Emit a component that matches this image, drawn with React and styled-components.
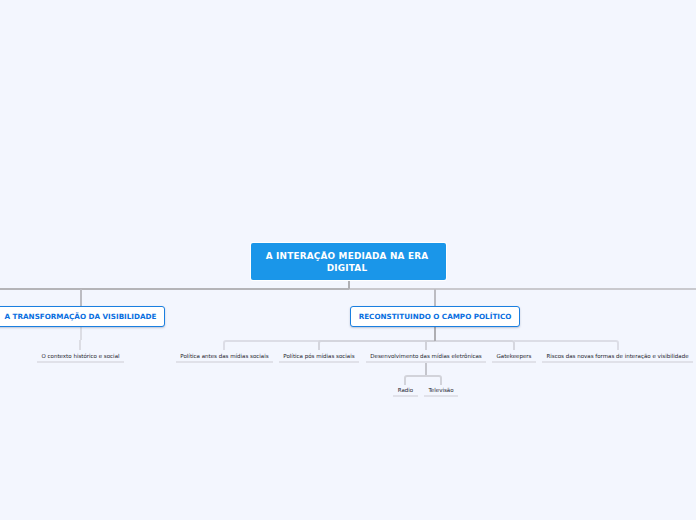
import React from "react";
import styled, { createGlobalStyle } from "styled-components";

const GlobalStyle = createGlobalStyle`
  html, body {
    margin: 0;
    padding: 0;
    background: #f3f6fe;
  }
`;

const branches = [
  { x: 37, y: 350, w: 87, text: "O contexto histórico e social" },
  { x: 176, y: 350, w: 97, text: "Política antes das mídias sociais" },
  { x: 279, y: 350, w: 80, text: "Política pós mídias sociais" },
  { x: 366, y: 350, w: 120, text: "Desenvolvimento das mídias eletrônicas" },
  { x: 492, y: 350, w: 44, text: "Gatekeepers" },
  { x: 542, y: 350, w: 151, text: "Riscos das novas formas de interação e visibilidade" },
  { x: 393, y: 384, w: 25, text: "Radio" },
  { x: 424, y: 384, w: 34, text: "Televisão" },
];

const lines = [
  { d: "M0 289H349", color: "#b4b4b8" },
  { d: "M349 289H696", color: "#c9c9ce" },
  { d: "M349 279V289", color: "#b0b0b4" },
  { d: "M81 289V307", color: "#bcbcc2" },
  { d: "M435 289V307", color: "#bcbcc2" },
  { d: "M81 327V340", color: "#dcdde4" },
  { d: "M80 340V350", color: "#dcdde4" },
  { d: "M224 350V343Q224 341 226 341H435", color: "#dcdde6" },
  { d: "M319 350V343Q319 341 321 341H435", color: "#d4d5dd" },
  { d: "M426 350V341H435", color: "#d0d1d8" },
  { d: "M435 341H512Q514 341 514 343V350", color: "#d6d7df" },
  { d: "M514 341H616Q618 341 618 343V350", color: "#dcdde6" },
  { d: "M435 327V341", color: "#aeaeb3" },
  { d: "M426 363V376", color: "#c4c5cc" },
  { d: "M405 385V378Q405 376 407 376H426", color: "#d2d3da" },
  { d: "M426 376H439Q441 376 441 378V385", color: "#d2d3da" },
];

const App = () => {
  return (
    <Canvas>
      <GlobalStyle />
      <Connectors viewBox="0 0 696 520">
        {lines.map((line) => (
          <path
            key={line.d}
            d={line.d}
            stroke={line.color}
            strokeWidth={2}
            fill="none"
          />
        ))}
      </Connectors>
      <RootNode>
        A INTERAÇÃO MEDIADA NA ERA
        <br />
        DIGITAL
      </RootNode>
      <MainNode $x={-4} $w={169}>
        A TRANSFORMAÇÃO DA VISIBILIDADE
      </MainNode>
      <MainNode $x={350} $w={170}>
        RECONSTITUINDO O CAMPO POLÍTICO
      </MainNode>
      {branches.map((b) => (
        <Branch key={b.text} $x={b.x} $y={b.y} $w={b.w}>
          {b.text}
        </Branch>
      ))}
    </Canvas>
  );
};

const Canvas = styled.div`
  position: relative;
  width: 696px;
  height: 520px;
  overflow: hidden;
  background: #f3f6fe;
  font-family: "DejaVu Sans", Verdana, sans-serif;
`;

const Connectors = styled.svg`
  position: absolute;
  left: 0;
  top: 0;
  width: 696px;
  height: 520px;
`;

const RootNode = styled.div`
  position: absolute;
  left: 251px;
  top: 243px;
  width: 195px;
  height: 37px;
  box-sizing: border-box;
  padding: 8px 3px 0 0;
  background: #1a96e9;
  border-radius: 2px;
  box-shadow: 0 0 0 1px #ffffff;
  color: #ffffff;
  font-size: 8.9px;
  font-weight: 700;
  line-height: 11.5px;
  letter-spacing: 0.2px;
  text-align: center;
  white-space: nowrap;
`;

const MainNode = styled.div`
  position: absolute;
  left: ${(p) => p.$x}px;
  top: 306px;
  width: ${(p) => p.$w}px;
  height: 21px;
  box-sizing: border-box;
  display: flex;
  align-items: center;
  justify-content: center;
  background: #ffffff;
  border: 1.5px solid #1a7fe0;
  border-radius: 3px;
  box-shadow: 0 1px 2px rgba(60, 80, 120, 0.3);
  color: #0a6fe0;
  font-size: 7.2px;
  font-weight: 700;
  white-space: nowrap;
`;

const Branch = styled.div`
  position: absolute;
  left: ${(p) => p.$x}px;
  top: ${(p) => p.$y}px;
  width: ${(p) => p.$w}px;
  height: 13px;
  box-sizing: border-box;
  display: flex;
  align-items: center;
  justify-content: center;
  border-bottom: 2px solid #e0e1e9;
  color: #22232b;
  font-size: 5.5px;
  white-space: nowrap;
`;

export default App;
